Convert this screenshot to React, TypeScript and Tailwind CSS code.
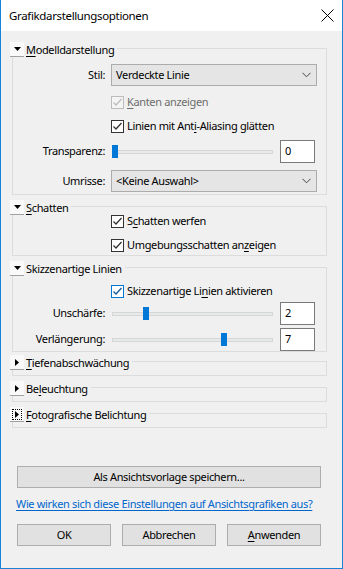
import type { ReactNode } from "react";

const font = "font-['Noto_Sans',sans-serif] tracking-[-0.35px]";

function Check({ state = "on" }: { state?: "on" | "disabled" | "focus" }) {
  const box =
    state === "disabled"
      ? "border-[#bcbcbc] bg-[#f4f4f4]"
      : state === "focus"
        ? "border-[#0078d7] bg-white"
        : "border-[#333333] bg-white";
  const stroke = state === "disabled" ? "#bcbcbc" : state === "focus" ? "#1a5a96" : "#333333";
  return (
    <span className={`flex h-[13px] w-[13px] shrink-0 items-center justify-center border ${box}`}>
      <svg width="11" height="11" viewBox="0 0 11 11">
        <path d="M1.5 5.5 L4 8 L9.5 2" fill="none" stroke={stroke} strokeWidth="1.3" />
      </svg>
    </span>
  );
}

function CheckRow({ state, mt, children }: { state?: "on" | "disabled" | "focus"; mt: string; children: ReactNode }) {
  return (
    <div className={`flex h-[13px] items-center pl-[98px] ${mt}`}>
      <Check state={state} />
      <span className={`ml-[3px] whitespace-nowrap ${state === "disabled" ? "text-[#6d6d6d]" : "text-black"}`}>
        {children}
      </span>
    </div>
  );
}

function Select({ value }: { value: string }) {
  return (
    <div className="flex h-[22px] w-[206px] items-center justify-between border border-[#acacac] bg-[#e5e5e5] pl-[4px] pr-[5px]">
      <span>{value}</span>
      <svg width="9" height="6" viewBox="0 0 9 6">
        <path d="M0.5 0.8 L4.5 4.8 L8.5 0.8" fill="none" stroke="#444" strokeWidth="1" />
      </svg>
    </div>
  );
}

function Slider({ left }: { left: number }) {
  return (
    <div className="relative flex h-[23px] w-[164px] items-center pl-[1px] pr-[2px]">
      <div className="h-[4px] w-full border border-[#d6d6d6] bg-[#e7eaea]" />
      <div className="absolute top-[5px] h-[13px] w-[6px] bg-[#0078d7]" style={{ left }} />
    </div>
  );
}

function Field({ value }: { value: string }) {
  return (
    <div className="flex h-[23px] w-[35px] items-center border border-[#7a7a7a] bg-white pl-[4px]">{value}</div>
  );
}

function Label({ children }: { children: ReactNode }) {
  return <span className="w-[92px] shrink-0 text-right">{children}</span>;
}

function Header({ open, focus, label }: { open: boolean; focus?: boolean; label: ReactNode }) {
  return (
    <div className="relative z-10 flex h-[15px] items-center">
      <span className="flex h-[15px] w-[14px] items-center justify-center border-b border-[#a0a0a0] bg-[#f9f9f9]">
        <span className={`flex h-[11px] w-[10px] items-center justify-center ${focus ? "border border-dotted border-black" : ""}`}>
          {open ? (
            <svg width="7" height="4" viewBox="0 0 7 4">
              <path d="M0 0 H7 L3.5 4 Z" fill="#000" />
            </svg>
          ) : (
            <svg width="4" height="7" viewBox="0 0 4 7">
              <path d="M0 0 V7 L4 3.5 Z" fill="#000" />
            </svg>
          )}
        </span>
      </span>
      <span className="bg-[#f0f0f0] pl-[2px] pr-[3px] leading-[15px] whitespace-nowrap">{label}</span>
    </div>
  );
}

function Section({ header, height, className = "", children }: { header: ReactNode; height: string; className?: string; children?: ReactNode }) {
  return (
    <div className={`ml-[9px] w-[317px] ${className}`}>
      {header}
      <div className={`-mt-[9px] ml-[2px] border border-[#dcdcdc] ${height}`}>{children}</div>
    </div>
  );
}

function Btn({ w, children }: { w: string; children: ReactNode }) {
  return (
    <div className={`flex h-[22px] items-center justify-center border border-[#adadad] bg-[#e1e1e1] ${w}`}>
      {children}
    </div>
  );
}

const U = ({ children }: { children: ReactNode }) => <span className="underline underline-offset-2">{children}</span>;

export default function App() {
  return (
    <div className={`flex h-[569px] w-[343px] flex-col border-x border-b border-[#1883d7] bg-[#f0f0f0] text-[11px] text-black ${font}`}>
      <div className="flex h-[31px] shrink-0 items-center justify-between bg-white pl-[8px] pr-[8px]">
        <span className="text-[11.5px]">Grafikdarstellungsoptionen</span>
        <svg width="13" height="13" viewBox="0 0 13 13">
          <path d="M0.5 0.5 L12.5 12.5 M12.5 0.5 L0.5 12.5" stroke="#000" strokeWidth="1" />
        </svg>
      </div>

      <div className="mt-[11px] flex flex-col gap-[5px]">
        <Section header={<Header open label={<><U>M</U>odelldarstellung</>} />} height="h-[147px]">
          <div className="flex flex-col">
            <div className="mt-[15px] flex items-center gap-[6px]">
              <Label>Stil:</Label>
              <Select value="Verdeckte Linie" />
            </div>
            <CheckRow state="disabled" mt="mt-[10px]">
              <U>K</U>anten anzeigen
            </CheckRow>
            <CheckRow mt="mt-[11px]">
              Linien mit Ant<U>i</U>-Aliasing glätten
            </CheckRow>
            <div className="mt-[7px] flex items-center">
              <Label>Transparenz:</Label>
              <span className="ml-[6px]">
                <Slider left={1} />
              </span>
              <span className="ml-[5px]">
                <Field value="0" />
              </span>
            </div>
            <div className="mt-[7px] flex items-center gap-[6px]">
              <Label>Umrisse:</Label>
              <Select value="<Keine Auswahl>" />
            </div>
          </div>
        </Section>

        <Section header={<Header open label={<><U>S</U>chatten</>} />} height="h-[50px]">
          <CheckRow mt="mt-[8px]">
            S<U>c</U>hatten werfen
          </CheckRow>
          <CheckRow mt="mt-[11px]">
            Umgebungsschatten an<U>z</U>eigen
          </CheckRow>
        </Section>

        <Section header={<Header open label="Skizzenartige Linien" />} height="h-[85px]">
          <CheckRow state="focus" mt="mt-[17px]">
            Skizzenartige Li<U>n</U>ien aktivieren
          </CheckRow>
          <div className="mt-[4px] flex items-center">
            <Label>Unschärfe:</Label>
            <span className="ml-[6px]">
              <Slider left={32} />
            </span>
            <span className="ml-[5px]">
              <Field value="2" />
            </span>
          </div>
          <div className="mt-[3px] flex items-center">
            <Label>Verlängerung:</Label>
            <span className="ml-[6px]">
              <Slider left={110} />
            </span>
            <span className="ml-[5px]">
              <Field value="7" />
            </span>
          </div>
        </Section>

        <Section className="-mt-[2px]" header={<Header open={false} label={<><U>T</U>iefenabschwächung</>} />} height="h-[15px]" />
        <Section header={<Header open={false} label={<>Be<U>l</U>euchtung</>} />} height="h-[15px]" />
        <Section header={<Header open={false} focus label={<><U>F</U>otografische Belichtung</>} />} height="h-[15px]" />
      </div>

      <div className="ml-[16px] mt-[38px]">
        <Btn w="w-[304px]">Als Ansichtsvorlage speichern...</Btn>
      </div>
      <div className="ml-[15px] mt-[8px] whitespace-nowrap leading-[16px]">
        <span className="text-[#0066cc] underline underline-offset-2">Wie wirken sich diese Einstellungen auf Ansichtsgrafiken aus?</span>
      </div>
      <div className="ml-[16px] mt-[12px] flex gap-[11px]">
        <Btn w="w-[94px]">OK</Btn>
        <Btn w="w-[94px]">Abbrechen</Btn>
        <Btn w="w-[94px]">
          <span>
            <U>A</U>nwenden
          </span>
        </Btn>
      </div>
    </div>
  );
}
